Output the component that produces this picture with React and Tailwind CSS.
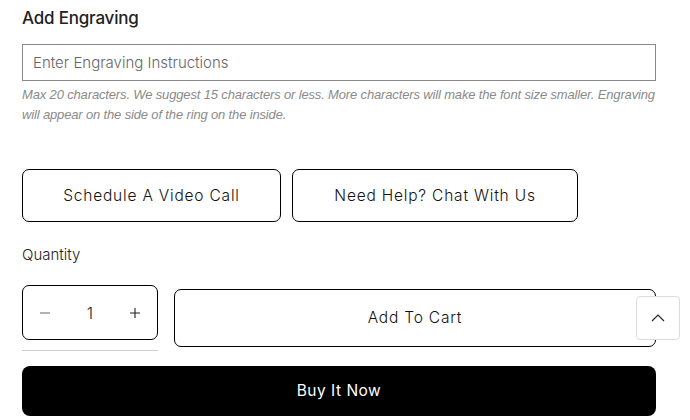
import React from 'react'

const font = { fontFamily: 'Inter, "Liberation Sans", Arial, sans-serif' }

function QuantityPicker() {
  return (
    <div className="w-[136px]">
      <div className="flex h-[55px] items-center justify-between rounded-[7px] border border-black px-[16px] text-[#222]">
        <svg width="12" height="12" viewBox="0 0 12 12" aria-hidden="true">
          <path d="M1 6h10" stroke="#666" strokeWidth="1" />
        </svg>
        <span className="text-[16px] font-light">1</span>
        <svg width="12" height="12" viewBox="0 0 12 12" aria-hidden="true">
          <path d="M1 6h10M6 1v10" stroke="#222" strokeWidth="1.1" />
        </svg>
      </div>
      <div className="mt-[10px] h-px bg-[#cfcfcf]" />
    </div>
  )
}

export default function App() {
  return (
    <div className="relative h-[420px] w-[690px] overflow-hidden bg-white pl-[22px] pr-[34px] text-[#222]" style={font}>
      <h2 className="pt-[6px] text-[17px] font-medium leading-[24px] tracking-[-0.2px] text-[#222]">Add Engraving</h2>

      <input
        type="text"
        placeholder="Enter Engraving Instructions"
        className="mt-[14px] h-[37px] w-full border border-[#8a8a8a] px-[10px] text-[15px] font-light text-[#222] outline-none placeholder:text-[#666]"
      />

      <p className="mt-[4px] font-['Liberation_Sans',Arial,sans-serif] text-[13px] italic leading-[20px] tracking-[-0.15px] text-[#8a8a8a]">
        Max 20 characters. We suggest 15 characters or less. More characters will make the font size smaller. Engraving will appear on the side of the ring on the inside.
      </p>

      <div className="mt-[44px] flex gap-[11px]">
        <button type="button" className="h-[53px] w-[259px] rounded-[7px] border border-black text-[15.5px] font-light tracking-[0.8px] text-[#111]">
          Schedule A Video Call
        </button>
        <button type="button" className="h-[53px] w-[286px] rounded-[7px] border border-black text-[15.5px] font-light tracking-[0.8px] text-[#111]">
          Need Help? Chat With Us
        </button>
      </div>

      <div className="mt-[23px] text-[15px] font-light leading-[20px] text-[#222]">Quantity</div>

      <div className="mt-[20px] flex items-start gap-[16px]">
        <QuantityPicker />
        <button type="button" className="mt-[4px] h-[58px] flex-1 rounded-[7px] border border-black text-[15.5px] font-light tracking-[0.8px] text-[#111]">
          Add To Cart
        </button>
      </div>

      <button type="button" className="mt-[15px] h-[50px] w-full rounded-[8px] bg-black text-[15.5px] tracking-[0.5px] text-white">
        Buy It Now
      </button>

      <button
        type="button"
        aria-label="Back to top"
        className="absolute left-[636px] top-[296px] flex h-[44px] w-[44px] items-center justify-center rounded-[4px] border border-[#dcdcdc] bg-white"
      >
        <svg width="16" height="16" viewBox="0 0 16 16" aria-hidden="true">
          <path d="M2 11 8 5l6 6" fill="none" stroke="#222" strokeWidth="1.1" />
        </svg>
      </button>
    </div>
  )
}
